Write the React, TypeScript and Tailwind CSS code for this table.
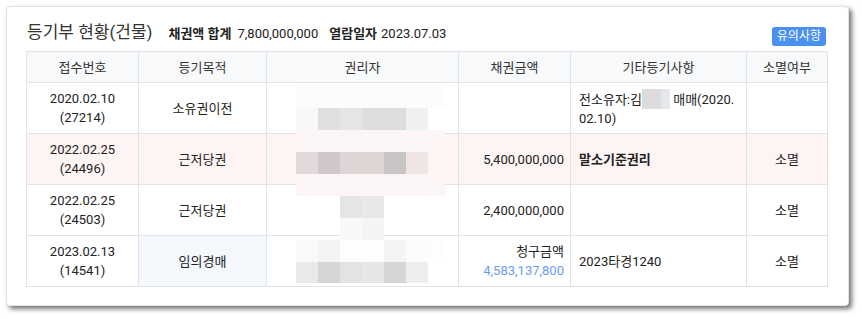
import React from "react";

const W = "transparent";
const mosaic: string[][] = [
  ["#fcfcfc", "#fcfcfc", "#fcfcfc", "#fcfcfc", "#fcfcfc", "#fcfcfc", "#fcfcfc"],
  ["#f8f8f8", "#dfdfdf", "#e4e5e4", "#dedcdc", "#dcdddc", "#eff0f2", "#ffffff"],
  ["#fbf6f5", "#fbf6f5", "#fbf6f5", "#fbf6f5", "#fbf6f5", "#fbf6f5", "#fbf6f5"],
  ["#e2d9da", "#cfc7c8", "#ddd6d6", "#dfd5d5", "#c9c5c5", "#efe5e5", "#fbf5f4"],
  ["#fbf6f5", "#fbf6f5", "#fbf6f5", "#fbf6f5", "#fbf6f5", "#fbf6f5", "#fbf6f5"],
  [W, W, "#e5e5e4", "#e8e8e8", W, W, W],
  [W, W, "#f8f8f8", "#f4f4f4", W, W, W],
  ["#f9f9f9", "#f4f4f4", "#fdfdfd", "#fdfdfd", "#f4f4f4", "#fcfcfc", "#fdfdfd"],
  ["#e8e9e8", "#d6d6d6", "#e2e3e5", "#e6e6e5", "#d6d6d6", "#efeeec", W],
];

function Mosaic() {
  return (
    <div className="absolute left-[296px] top-[80px] flex flex-col">
      {mosaic.map((row, i) => (
        <div key={i} className={`flex ${i === 8 ? "h-[21px]" : "h-[22px]"}`}>
          {row.map((c, j) => (
            <div
              key={j}
              className={j === 6 ? "w-[17px] h-full" : "w-[22px] h-full"}
              style={{ backgroundColor: c }}
            />
          ))}
        </div>
      ))}
    </div>
  );
}

const td = "border border-[#dfe3ea] px-2 align-middle";

export default function App() {
  return (
    <div
      className="relative w-[862px] h-[319px] bg-white text-[#222]"
      style={{ fontFamily: 'Roboto, "Noto Sans CJK KR", sans-serif' }}
    >
      <div className="ml-[6px] mt-[6px] w-[843px] h-[300px] rounded-[4px] border border-[#e2e2e2] bg-white shadow-[3px_3px_5px_rgba(0,0,0,0.55)] pl-[19px] pr-[22px]">
        <div className="flex items-end justify-between h-[44px] pb-[6px]">
          <div className="flex items-baseline pl-[1px]">
            <span className="text-[17px] text-[#333]">등기부 현황(건물)</span>
            <span className="ml-[16px] text-[13px] font-bold text-[#222]">채권액 합계</span>
            <span className="ml-[6px] text-[13px] text-[#222]">7,800,000,000</span>
            <span className="ml-[11px] text-[13px] font-bold text-[#222]">열람일자</span>
            <span className="ml-[4px] text-[13px] text-[#222]">2023.07.03</span>
          </div>
          <span className="mb-[-1px] h-[19px] rounded-[3px] bg-[#4a90ee] px-[5px] text-[12px] leading-[19px] text-white">
            유의사항
          </span>
        </div>
        <table className="table-fixed border-collapse w-[801px] text-[13px] leading-[19px]">
          <colgroup>
            <col className="w-[112px]" />
            <col className="w-[128px]" />
            <col className="w-[192px]" />
            <col className="w-[112px]" />
            <col className="w-[176px]" />
            <col className="w-[81px]" />
          </colgroup>
          <thead>
            <tr className="h-[31px] bg-[#f8f9fb] text-[#333]">
              <th className={`${td} font-normal text-center`}>접수번호</th>
              <th className={`${td} font-normal text-center`}>등기목적</th>
              <th className={`${td} font-normal text-center`}>권리자</th>
              <th className={`${td} font-normal text-center`}>채권금액</th>
              <th className={`${td} font-normal text-center`}>기타등기사항</th>
              <th className={`${td} font-normal text-center`}>소멸여부</th>
            </tr>
          </thead>
          <tbody>
            <tr className="h-[51px]">
              <td className={`${td} text-center`}>
                2020.02.10
                <br />
                (27214)
              </td>
              <td className={`${td} text-center`}>소유권이전</td>
              <td className={td}></td>
              <td className={`${td} text-right`}></td>
              <td className={td}>
                전소유자:김
                <span className="inline-block w-[28px] h-[20px] align-[-5px] bg-[linear-gradient(90deg,#dcdcdc_0,#dcdcdc_19px,#e4e8ec_19px)]" />
                {" "}매매(2020.
                <br />
                02.10)
              </td>
              <td className={`${td} text-center`}></td>
            </tr>
            <tr className="h-[51px] bg-[#fdf4f3]">
              <td className={`${td} text-center`}>
                2022.02.25
                <br />
                (24496)
              </td>
              <td className={`${td} text-center`}>근저당권</td>
              <td className={td}></td>
              <td className={`${td} text-right pr-[6px]`}>5,400,000,000</td>
              <td className={`${td} font-bold`}>말소기준권리</td>
              <td className={`${td} text-center`}>소멸</td>
            </tr>
            <tr className="h-[51px]">
              <td className={`${td} text-center`}>
                2022.02.25
                <br />
                (24503)
              </td>
              <td className={`${td} text-center`}>근저당권</td>
              <td className={td}></td>
              <td className={`${td} text-right pr-[6px]`}>2,400,000,000</td>
              <td className={td}></td>
              <td className={`${td} text-center`}>소멸</td>
            </tr>
            <tr className="h-[51px]">
              <td className={`${td} text-center`}>
                2023.02.13
                <br />
                (14541)
              </td>
              <td className={`${td} text-center bg-[#f4f8fd]`}>임의경매</td>
              <td className={td}></td>
              <td className={`${td} text-right pr-[6px]`}>
                청구금액
                <br />
                <span className="text-[#6b9cf2]">4,583,137,800</span>
              </td>
              <td className={td}>2023타경1240</td>
              <td className={`${td} text-center`}>소멸</td>
            </tr>
          </tbody>
        </table>
      </div>
      <Mosaic />
    </div>
  );
}
